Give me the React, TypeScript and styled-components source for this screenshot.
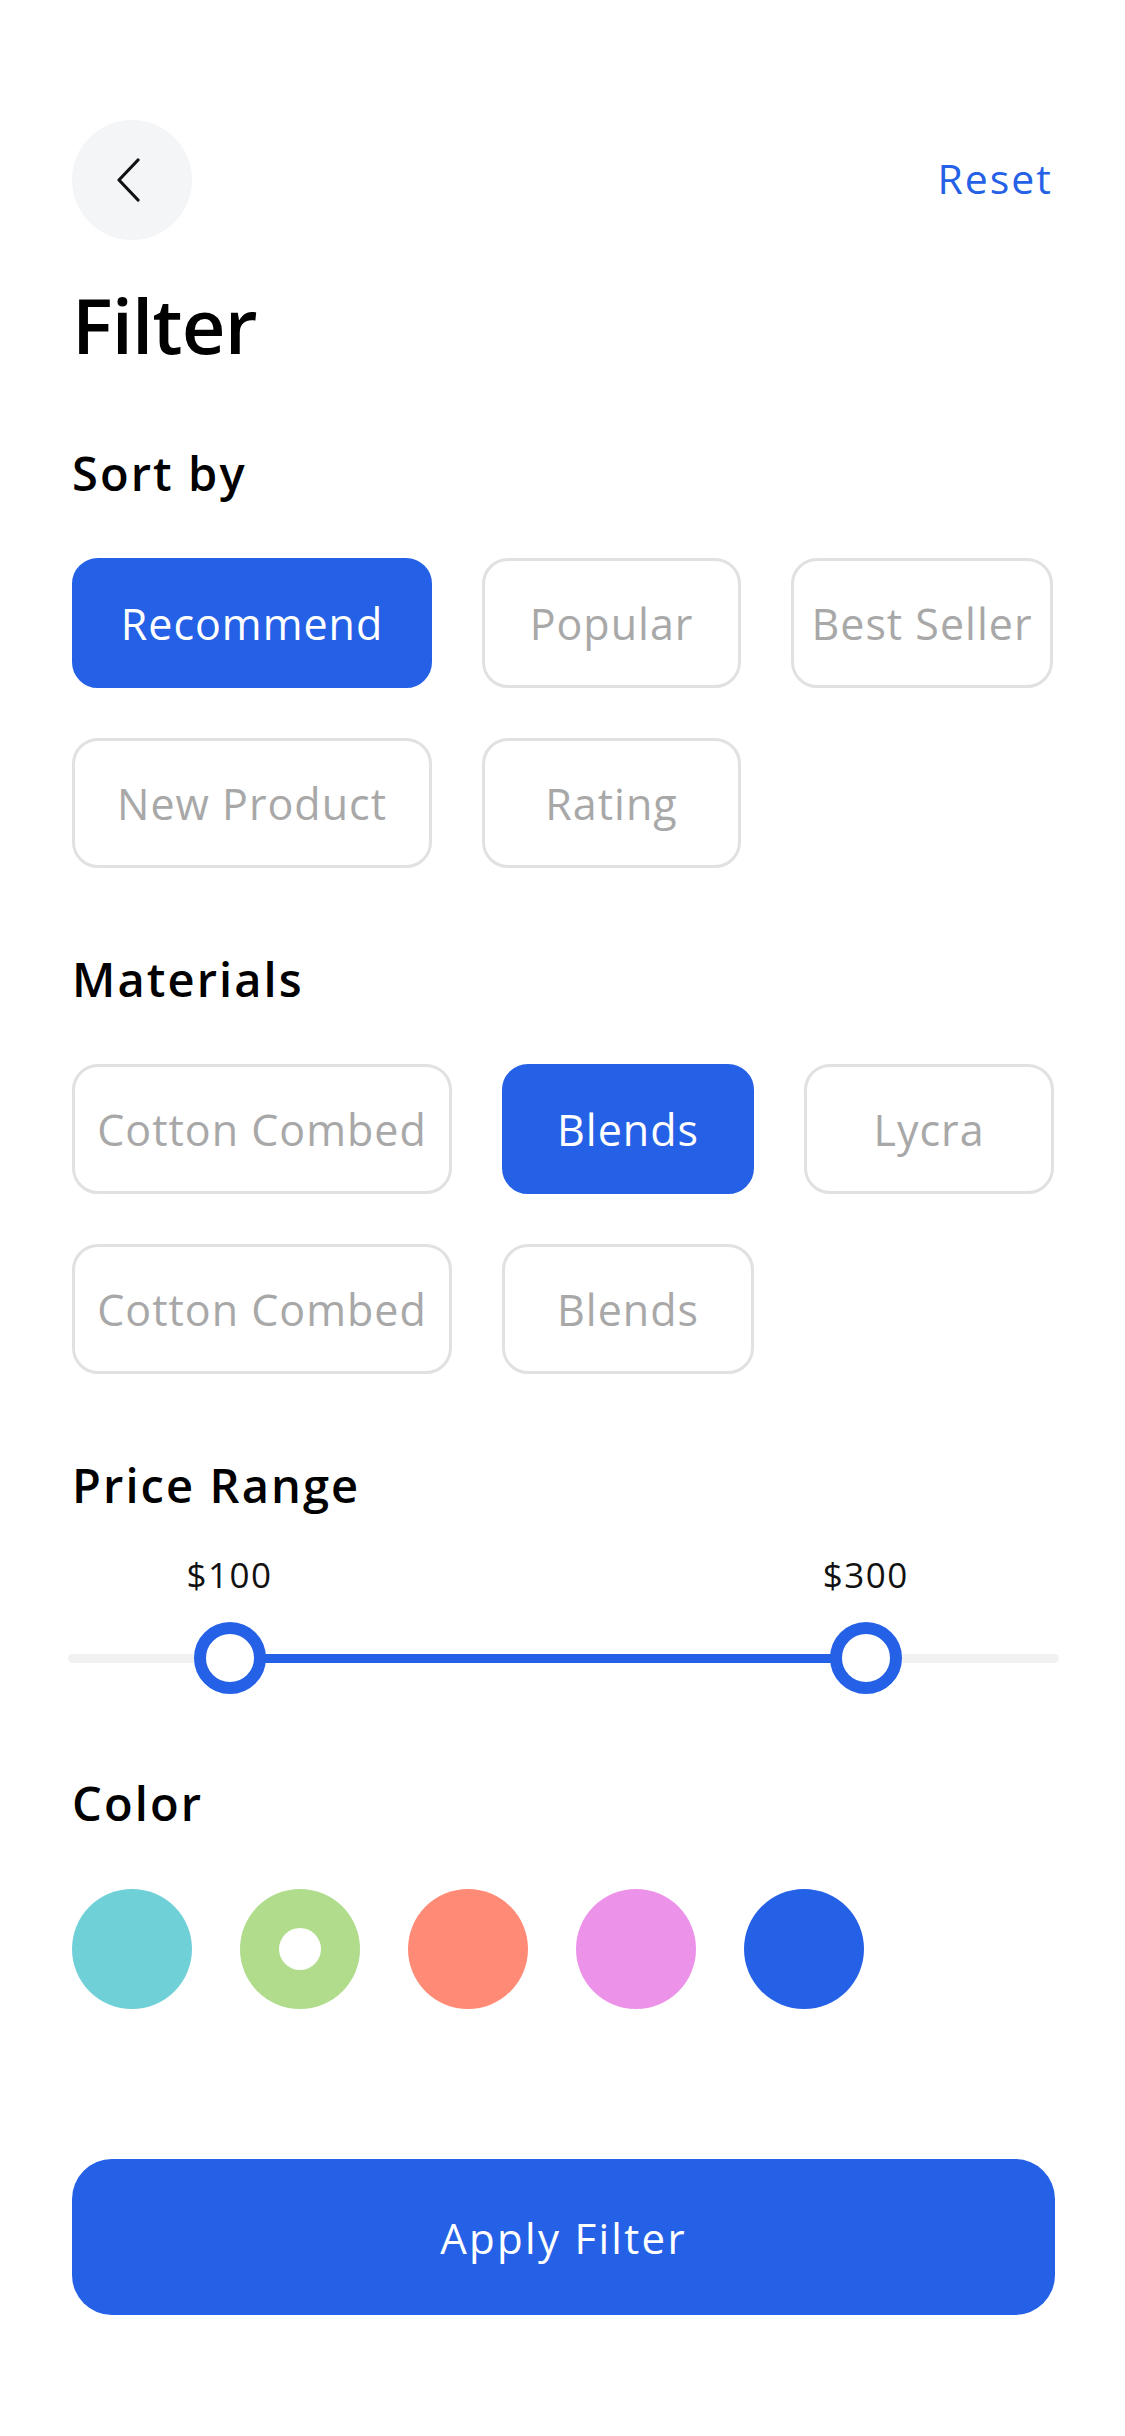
import React from "react";
import styled, { createGlobalStyle } from "styled-components";

const GlobalStyle = createGlobalStyle`
  html, body { margin: 0; padding: 0; background: #ffffff; }
  body { font-family: "Open Sans", "Noto Sans", "Liberation Sans", sans-serif; -webkit-font-smoothing: antialiased; }
  * { box-sizing: border-box; }
`;

const BLUE = "#2561e6";

const Page = styled.div`
  width: 1125px;
  min-height: 2436px;
  padding: 120px 71px 0 72px;
  display: flex;
  flex-direction: column;
`;

const Header = styled.div`
  display: flex;
  align-items: center;
  justify-content: space-between;
  height: 120px;
`;

const BackButton = styled.button`
  width: 120px;
  height: 120px;
  border-radius: 50%;
  border: none;
  background: #f4f5f7;
  display: flex;
  align-items: center;
  justify-content: center;
  padding: 0 6px 0 0;
  cursor: pointer;
`;

const ResetLink = styled.span`
  font-size: 41px;
  line-height: 56px;
  color: ${BLUE};
  letter-spacing: 2px;
  margin-top: -4px;
  margin-right: 1px;
`;

const Title = styled.h1`
  margin: 39px 0 0 0;
  font-size: 76px;
  line-height: 92px;
  font-weight: 600;
  color: #000;
  letter-spacing: -0.8px;
`;

const SectionTitle = styled.h2<{ $gap: number }>`
  margin: ${(p) => p.$gap}px 0 0 0;
  font-size: 47px;
  line-height: 64px;
  font-weight: 600;
  color: #000;
  letter-spacing: 2.1px;
`;

const ChipGrid = styled.div<{ $cols: string }>`
  margin-top: 53px;
  display: grid;
  grid-template-columns: ${(p) => p.$cols};
  column-gap: 50px;
  row-gap: 50px;
`;

const Chip = styled.div<{ $active?: boolean }>`
  height: 130px;
  border-radius: 26px;
  display: flex;
  align-items: center;
  justify-content: center;
  white-space: nowrap;
  font-size: 43px;
  letter-spacing: 1px;
  font-weight: ${(p) => (p.$active ? 500 : 400)};
  color: ${(p) => (p.$active ? "#ffffff" : "#a8a8a8")};
  background: ${(p) => (p.$active ? BLUE : "#ffffff")};
  border: 3px solid ${(p) => (p.$active ? BLUE : "#e1e1e1")};
`;

const Slider = styled.div`
  margin-top: 34px;
  display: flex;
  flex-direction: column;
  margin-left: -4px;
  margin-right: -5px;
`;

const LabelRow = styled.div`
  position: relative;
  height: 48px;
`;

const PriceLabel = styled.span`
  position: absolute;
  top: 0;
  transform: translateX(-50%);
  font-size: 35px;
  line-height: 48px;
  color: #111;
  letter-spacing: 1.5px;
`;

const TrackArea = styled.div`
  position: relative;
  margin-top: 23px;
  height: 72px;
  display: flex;
  align-items: center;
`;

const Track = styled.div`
  width: 100%;
  height: 9px;
  border-radius: 5px;
  background: #f1f1f2;
`;

const ActiveTrack = styled.div`
  position: absolute;
  top: 50%;
  height: 9px;
  margin-top: -4.5px;
  background: ${BLUE};
`;

const Thumb = styled.div`
  position: absolute;
  top: 0;
  width: 72px;
  height: 72px;
  margin-left: -36px;
  border-radius: 50%;
  border: 12px solid ${BLUE};
  background: #fff;
`;

const Swatches = styled.div`
  margin-top: 54px;
  display: flex;
  gap: 48px;
`;

const Swatch = styled.div<{ $color: string; $selected?: boolean }>`
  width: 120px;
  height: 120px;
  border-radius: 50%;
  background: ${(p) => p.$color};
  display: flex;
  align-items: center;
  justify-content: center;
  &::after {
    content: "";
    display: ${(p) => (p.$selected ? "block" : "none")};
    width: 42px;
    height: 42px;
    border-radius: 50%;
    background: #fff;
  }
`;

const ApplyButton = styled.button`
  margin-top: 150px;
  width: 983px;
  height: 156px;
  border: none;
  border-radius: 40px;
  background: ${BLUE};
  color: #fff;
  font-family: inherit;
  font-size: 42px;
  font-weight: 500;
  letter-spacing: 2.3px;
  cursor: pointer;
`;

const sortOptions = [
  { label: "Recommend", active: true },
  { label: "Popular" },
  { label: "Best Seller" },
  { label: "New Product" },
  { label: "Rating" },
];

const materials = [
  { label: "Cotton Combed" },
  { label: "Blends", active: true },
  { label: "Lycra" },
  { label: "Cotton Combed" },
  { label: "Blends" },
];

const colors = [
  { color: "#70d0d8" },
  { color: "#b0dc8c", selected: true },
  { color: "#ff8a76" },
  { color: "#ec92e8" },
  { color: "#2561e6" },
];

const range = { low: { label: "$100", pos: 16.3 }, high: { label: "$300", pos: 80.5 } };

export default function App() {
  return (
    <>
      <GlobalStyle />
      <Page>
        <Header>
          <BackButton aria-label="Back">
            <svg width="24" height="44" viewBox="0 0 24 44" fill="none">
              <polyline
                points="21,2 2,22 21,42"
                stroke="#111"
                strokeWidth="3.2"
                strokeLinecap="round"
                strokeLinejoin="round"
              />
            </svg>
          </BackButton>
          <ResetLink>Reset</ResetLink>
        </Header>

        <Title>Filter</Title>

        <SectionTitle $gap={70}>Sort by</SectionTitle>
        <ChipGrid $cols="360px 259px 262px">
          {sortOptions.map((o, i) => (
            <Chip key={i} $active={o.active}>
              {o.label}
            </Chip>
          ))}
        </ChipGrid>

        <SectionTitle $gap={79}>Materials</SectionTitle>
        <ChipGrid $cols="380px 252px 250px">
          {materials.map((o, i) => (
            <Chip key={i} $active={o.active}>
              {o.label}
            </Chip>
          ))}
        </ChipGrid>

        <SectionTitle $gap={79}>Price Range</SectionTitle>
        <Slider>
          <LabelRow>
            <PriceLabel style={{ left: `${range.low.pos}%` }}>{range.low.label}</PriceLabel>
            <PriceLabel style={{ left: `${range.high.pos}%` }}>{range.high.label}</PriceLabel>
          </LabelRow>
          <TrackArea>
            <Track />
            <ActiveTrack
              style={{ left: `${range.low.pos}%`, width: `${range.high.pos - range.low.pos}%` }}
            />
            <Thumb style={{ left: `${range.low.pos}%` }} />
            <Thumb style={{ left: `${range.high.pos}%` }} />
          </TrackArea>
        </Slider>

        <SectionTitle $gap={77}>Color</SectionTitle>
        <Swatches>
          {colors.map((c, i) => (
            <Swatch key={i} $color={c.color} $selected={c.selected} />
          ))}
        </Swatches>

        <ApplyButton>Apply Filter</ApplyButton>
      </Page>
    </>
  );
}
